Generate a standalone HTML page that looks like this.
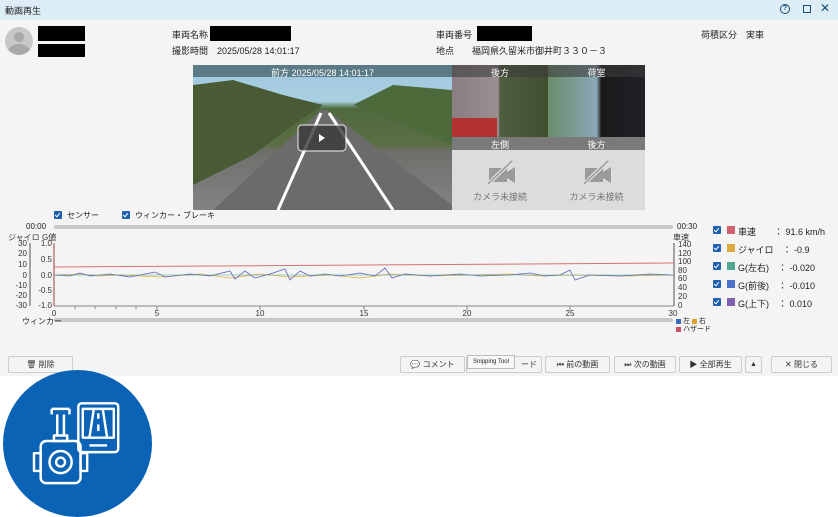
<!DOCTYPE html>
<html><head><meta charset="utf-8"><style>
*{margin:0;padding:0;box-sizing:border-box}
body{width:838px;height:515px;background:#fff;font-family:"Liberation Sans","Noto Sans CJK JP",sans-serif;font-size:9px;color:#222;position:relative;overflow:hidden}
.a{position:absolute;white-space:nowrap}
.blk{position:absolute;background:#000}
.cb{position:absolute;width:8px;height:8px;background:#1f5fb0;border-radius:1px}
.cb:after{content:"";position:absolute;left:2px;top:1px;width:2px;height:4px;border:solid #fff;border-width:0 1.3px 1.3px 0;transform:rotate(40deg)}
.btn{position:absolute;top:356px;height:17px;background:#f4f4f4;border:1px solid #ccc;border-radius:2px;font-size:8px;display:flex;align-items:center;justify-content:center;gap:4px;color:#333}
.sq{display:inline-block;width:8px;height:8px;vertical-align:middle}
</style></head><body>
<div class="a" style="left:0;top:0;width:838px;height:20px;background:#dcedf6"></div>
<div class="a" style="left:5px;top:4px;font-size:9px">動画再生</div>
<div class="a" style="left:780px;top:4px;width:10px;height:10px;border:1.3px solid #1b4f7a;border-radius:50%;font-size:7px;line-height:8px;text-align:center;color:#1b4f7a;font-weight:bold">?</div>
<div class="a" style="left:803px;top:5px;width:8px;height:8px;border:1.2px solid #1b4f7a"></div>
<div class="a" style="left:820px;top:1px;font-size:12px;color:#1b4f7a">✕</div>
<div class="a" style="left:0;top:20px;width:838px;height:356px;background:#f4f4f4"></div>
<div class="a" style="left:5px;top:27px;width:28px;height:28px;border-radius:50%;background:#c8c8c8;overflow:hidden"><div class="a" style="left:9px;top:5px;width:10px;height:10px;border-radius:50%;background:#a9a9a9"></div><div class="a" style="left:3px;top:17px;width:22px;height:16px;border-radius:50%;background:#a9a9a9"></div></div>
<div class="blk" style="left:38px;top:26px;width:47px;height:15px"></div>
<div class="blk" style="left:38px;top:44px;width:47px;height:13px"></div>
<div class="a" style="left:172px;top:28px">車両名称</div>
<div class="blk" style="left:210px;top:26px;width:81px;height:15px"></div>
<div class="a" style="left:172px;top:44px">撮影時間　2025/05/28 14:01:17</div>
<div class="a" style="left:436px;top:28px">車両番号</div>
<div class="blk" style="left:477px;top:26px;width:55px;height:15px"></div>
<div class="a" style="left:436px;top:44px">地点　　福岡県久留米市御井町３３０－３</div>
<div class="a" style="left:701px;top:28px">荷積区分　実車</div>
<!-- video -->
<div class="a" style="left:193px;top:65px;width:259px;height:145px;background:linear-gradient(#9fc6dc 0%,#a9d0e2 25%,#4f6a3e 30%,#5b6e44 55%,#6f706c 60%,#838383 100%)"></div>
<svg class="a" style="left:193px;top:65px" width="259" height="145"><polygon points="0,20 40,15 90,30 130,40 100,60 60,90 0,120" fill="#4a5a35"/><polygon points="160,40 200,20 259,25 259,80 200,55" fill="#4c6a3a"/><polygon points="20,145 128,45 134,45 259,140 259,145" fill="#6b6b6b"/><line x1="85" y1="145" x2="128" y2="48" stroke="#fff" stroke-width="3"/><line x1="200" y1="145" x2="136" y2="48" stroke="#fff" stroke-width="3"/><rect x="0" y="0" width="259" height="12" fill="#4d6c77" opacity=".85"/><rect x="105" y="60" width="48" height="26" rx="4" fill="#3a3a3a" opacity=".8" stroke="#eee" stroke-width="1.2"/><polygon points="126,69 126,77 132,73" fill="#fff"/></svg>
<div class="a" style="left:193px;top:66px;width:259px;text-align:center;color:#fff;font-size:9px">前方 2025/05/28 14:01:17</div>
<div class="a" style="left:452px;top:65px;width:96px;height:72px;background:linear-gradient(90deg,#8a7e84 0%,#9a8e90 48%,#4e5e3e 50%,#3e4e2e 100%)"></div>
<div class="a" style="left:452px;top:118px;width:45px;height:19px;background:#b53030"></div>
<div class="a" style="left:548px;top:65px;width:97px;height:72px;background:linear-gradient(90deg,#6a8c6a 0%,#8aa8b8 50%,#1a1a1a 55%,#202028 100%)"></div>
<div class="a" style="left:452px;top:65px;width:193px;height:12px;background:rgba(60,60,60,.6)"></div>
<div class="a" style="left:452px;top:66px;width:96px;text-align:center;color:#fff">後方</div>
<div class="a" style="left:548px;top:66px;width:97px;text-align:center;color:#fff">荷室</div>
<div class="a" style="left:452px;top:137px;width:193px;height:13px;background:#7a7a7a"></div>
<div class="a" style="left:452px;top:138px;width:96px;text-align:center;color:#fff">左側</div>
<div class="a" style="left:548px;top:138px;width:97px;text-align:center;color:#fff">後方</div>
<div class="a" style="left:452px;top:150px;width:193px;height:60px;background:#dcdcdc"></div>
<svg class="a" style="left:485px;top:158px" width="32" height="28"><rect x="4" y="10" width="18" height="14" fill="#9a9a9a"/><polygon points="22,14 30,9 30,25 22,20" fill="#9a9a9a"/><line x1="2" y1="27" x2="28" y2="2" stroke="#dcdcdc" stroke-width="4"/><line x1="3" y1="26" x2="27" y2="3" stroke="#9a9a9a" stroke-width="1.5"/></svg>
<svg class="a" style="left:581px;top:158px" width="32" height="28"><rect x="4" y="10" width="18" height="14" fill="#9a9a9a"/><polygon points="22,14 30,9 30,25 22,20" fill="#9a9a9a"/><line x1="2" y1="27" x2="28" y2="2" stroke="#dcdcdc" stroke-width="4"/><line x1="3" y1="26" x2="27" y2="3" stroke="#9a9a9a" stroke-width="1.5"/></svg>
<div class="a" style="left:452px;top:190px;width:96px;text-align:center;color:#777">カメラ未接続</div>
<div class="a" style="left:548px;top:190px;width:97px;text-align:center;color:#777">カメラ未接続</div>
<!-- checkboxes -->
<div class="cb" style="left:54px;top:211px"></div><div class="a" style="left:67px;top:210px;font-size:8px">センサー</div>
<div class="cb" style="left:122px;top:211px"></div><div class="a" style="left:135px;top:210px;font-size:8px">ウィンカー・ブレーキ</div>
<div class="a" style="left:26px;top:222px;font-size:8px">00:00</div>
<div class="a" style="left:677px;top:222px;font-size:8px">00:30</div>
<div class="a" style="left:54px;top:225px;width:619px;height:4px;background:#c8c8c8;border-radius:2px"></div>
<div class="a" style="left:54px;top:318px;width:619px;height:4px;background:#c8c8c8;border-radius:2px"></div>
<div class="a" style="left:22px;top:316px;font-size:8px">ウィンカー</div>
<svg class="a" style="left:0;top:230px" width="710" height="90" font-size="8" fill="#333" font-family="Liberation Sans,sans-serif">
<text x="8" y="10">ジャイロ</text><text x="42" y="10">G値</text><text x="673" y="10">車速</text>
<g text-anchor="end"><text x="27" y="16">30</text><text x="27" y="26">20</text><text x="27" y="37">10</text><text x="27" y="48">0</text><text x="27" y="58">-10</text><text x="27" y="68">-20</text><text x="27" y="78">-30</text>
<text x="52" y="16">1.0</text><text x="52" y="32">0.5</text><text x="52" y="48">0.0</text><text x="52" y="63">-0.5</text><text x="52" y="78">-1.0</text></g>
<line x1="30" y1="13" x2="30" y2="76" stroke="#555"/><line x1="54" y1="13" x2="54" y2="76" stroke="#a04040"/>
<line x1="674" y1="13" x2="674" y2="76" stroke="#555"/>
<g text-anchor="start"><text x="678" y="17">140</text><text x="678" y="26">120</text><text x="678" y="34">100</text><text x="678" y="43">80</text><text x="678" y="51">60</text><text x="678" y="60">40</text><text x="678" y="69">20</text><text x="678" y="78">0</text></g>
<line x1="54" y1="76" x2="674" y2="76" stroke="#888"/>
<g stroke="#888"><line x1="75" y1="76" x2="75" y2="79"/><line x1="95" y1="76" x2="95" y2="79"/><line x1="116" y1="76" x2="116" y2="79"/><line x1="136" y1="76" x2="136" y2="79"/><line x1="157" y1="76" x2="157" y2="80"/><line x1="260" y1="76" x2="260" y2="80"/><line x1="364" y1="76" x2="364" y2="80"/><line x1="467" y1="76" x2="467" y2="80"/><line x1="570" y1="76" x2="570" y2="80"/></g>
<g text-anchor="middle"><text x="54" y="86">0</text><text x="157" y="86">5</text><text x="260" y="86">10</text><text x="364" y="86">15</text><text x="467" y="86">20</text><text x="570" y="86">25</text><text x="673" y="86">30</text></g>
<polyline points="54,37 674,33" stroke="#d87070" fill="none"/>
<polyline points="54,45 80,44 100,46 120,45 160,47 200,44 230,48 260,44 290,47 330,45 360,48 390,44 430,46 470,45 510,44 540,46 570,45 620,46 674,45" stroke="#e0b040" fill="none" stroke-width=".8"/>
<polyline points="54,45 70,46 80,43 90,46 110,44 130,47 155,42 165,47 190,44 210,46 230,41 235,49 245,41 255,48 270,44 285,39 290,50 300,41 310,46 325,44 340,46 360,43 375,46 385,38 392,48 405,44 430,46 460,44 480,46 510,45 530,43 545,46 560,45 570,40 575,50 590,45 620,46 650,44 674,45" stroke="#6060c0" fill="none" stroke-width=".8"/>
<polyline points="54,45 674,45" stroke="#50a890" fill="none" stroke-width=".6"/>
</svg>
<div class="a" style="left:676px;top:316px;font-size:7px"><span class="sq" style="background:#3a6ac0;width:5px;height:5px"></span> 左 <span class="sq" style="background:#e0a030;width:5px;height:5px"></span> 右</div>
<div class="a" style="left:676px;top:324px;font-size:7px"><span class="sq" style="background:#d05060;width:5px;height:5px"></span> ハザード</div>
<!-- legend -->
<div class="cb" style="left:713px;top:226px"></div><span class="sq a" style="left:727px;top:226px;background:#d06070"></span><div class="a" style="left:738px;top:225px">車速　　：  91.6 km/h</div>
<div class="cb" style="left:713px;top:244px"></div><span class="sq a" style="left:727px;top:244px;background:#e0a840"></span><div class="a" style="left:738px;top:243px">ジャイロ　：  -0.9</div>
<div class="cb" style="left:713px;top:262px"></div><span class="sq a" style="left:727px;top:262px;background:#50a890"></span><div class="a" style="left:738px;top:261px">G(左右)　：  -0.020</div>
<div class="cb" style="left:713px;top:280px"></div><span class="sq a" style="left:727px;top:280px;background:#4a70c8"></span><div class="a" style="left:738px;top:279px">G(前後)　：  -0.010</div>
<div class="cb" style="left:713px;top:298px"></div><span class="sq a" style="left:727px;top:298px;background:#8060b0"></span><div class="a" style="left:738px;top:297px">G(上下)　：  0.010</div>
<!-- buttons -->
<div class="btn" style="left:8px;width:65px">🗑 削除</div>
<div class="btn" style="left:400px;width:65px">💬 コメント</div>
<div class="btn" style="left:466px;width:76px;justify-content:flex-end;padding-right:4px">ード</div>
<div class="a" style="left:467px;top:355px;width:48px;height:14px;background:#f8f8f8;border:1px solid #bbb;font-size:6px;line-height:12px;text-align:center">Snipping Tool</div>
<div class="btn" style="left:545px;width:65px">⏮ 前の動画</div>
<div class="btn" style="left:614px;width:62px">⏭ 次の動画</div>
<div class="btn" style="left:679px;width:63px">▶ 全部再生</div>
<div class="btn" style="left:745px;width:17px;font-size:7px">▲</div>
<div class="btn" style="left:771px;width:61px">✕ 閉じる</div>
<!-- logo -->
<div class="a" style="left:3px;top:370px;width:149px;height:147px;border-radius:50%;background:#0b63b5"></div>
<svg class="a" style="left:25px;top:400px" width="100" height="92" viewBox="0 0 90 83" fill="none" stroke="#fff" stroke-width="2.2" stroke-linejoin="round"><rect x="48" y="3" width="36" height="44" rx="3"/><rect x="52" y="8" width="28" height="26"/><path d="M58,34 L62,8 M74,34 L70,8"/><line x1="66" y1="12" x2="66" y2="17"/><line x1="66" y1="22" x2="66" y2="28"/><line x1="58" y1="41" x2="74" y2="41"/><line x1="24" y1="8" x2="40" y2="8"/><line x1="24" y1="8" x2="24" y2="13"/><line x1="40" y1="8" x2="40" y2="13"/><line x1="29" y1="13" x2="29" y2="32"/><line x1="35" y1="13" x2="35" y2="32"/><rect x="26" y="32" width="12" height="5"/><rect x="14" y="37" width="36" height="38" rx="5"/><circle cx="32" cy="56" r="10"/><circle cx="32" cy="56" r="4"/><rect x="8" y="48" width="6" height="16"/><rect x="50" y="48" width="6" height="16"/></svg>
</body></html>
